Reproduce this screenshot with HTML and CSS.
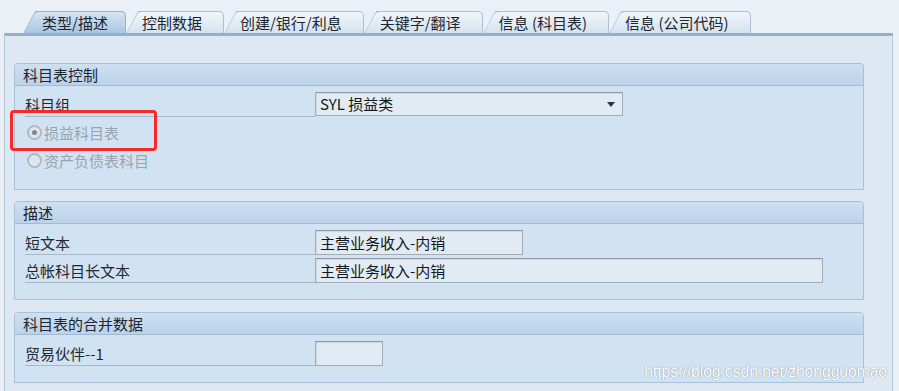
FILE: index.html
```html
<!DOCTYPE html>
<html lang="zh-CN">
<head>
  <meta charset="UTF-8">
  <title>科目表 - 类型/描述</title>
  <link rel="stylesheet" href="styles.css">
</head>
<body>

  <div class="screen">
    <!-- Tab strip -->
    <div class="tabs">
      <div class="tab active">类型/描述</div>
      <div class="tab">控制数据</div>
      <div class="tab">创建/银行/利息</div>
      <div class="tab">关键字/翻译</div>
      <div class="tab">信息 (科目表)</div>
      <div class="tab">信息 (公司代码)</div>
    </div>

    <div class="panel">
      <!-- 科目表控制 -->
      <section class="group group-control">
        <div class="group-title">科目表控制</div>
        <div class="group-body">
          <div class="row">
            <span class="label">科目组</span>
            <div class="select">SYL 损益类<span class="arrow"></span></div>
          </div>
          <div class="row radio-row">
            <span class="radio checked"></span>损益科目表
          </div>
          <div class="row radio-row">
            <span class="radio"></span>资产负债表科目
          </div>
        </div>
        <div class="highlight"></div>
      </section>

      <!-- 描述 -->
      <section class="group">
        <div class="group-title">描述</div>
        <div class="group-body">
          <div class="row">
            <span class="label">短文本</span>
            <div class="field field-short">主营业务收入-内销</div>
          </div>
          <div class="row">
            <span class="label">总帐科目长文本</span>
            <div class="field field-long">主营业务收入-内销</div>
          </div>
        </div>
      </section>

      <!-- 合并数据 -->
      <section class="group">
        <div class="group-title">科目表的合并数据</div>
        <div class="group-body">
          <div class="row">
            <span class="label">贸易伙伴--1</span>
            <div class="field field-tiny"></div>
          </div>
        </div>
      </section>

      <div class="watermark">https://blog.csdn.net/zhongguomao</div>
    </div>
  </div>

</body>
</html>
```

FILE: styles.css
```css
body {
  margin: 0;
  background: #eaf0f6;
  font-family: "Noto Sans CJK SC", "Liberation Sans", sans-serif;
  font-size: 15px;
  color: #1e2833;
}

.screen {
  height: 391px;
  overflow: hidden;
  display: flex;
  flex-direction: column;
  padding-top: 11px;
  box-sizing: border-box;
}

/* ---------- tabs ---------- */
.tabs {
  display: flex;
  padding-left: 23px;
  height: 22px;
}

.tab {
  position: relative;
  z-index: 1;
  margin-left: 12px;
  padding: 0 21px 0 4px;
  height: 22px;
  line-height: 22px;
  box-sizing: border-box;
  background: linear-gradient(#f1f6fa, #d4e2ef);
  border-top: 1px solid #a9c0d6;
  border-right: 1px solid #a9c0d6;
  border-radius: 0 5px 0 0;
  color: #1c2631;
  white-space: nowrap;
}

.tab::before {
  content: "";
  position: absolute;
  top: -1px;
  bottom: 0;
  left: -12px;
  width: 26px;
  background: linear-gradient(#f1f6fa, #d4e2ef);
  border-top: 1px solid #a9c0d6;
  border-left: 1px solid #a9c0d6;
  border-radius: 4px 0 0 0;
  transform: skewX(-28deg);
  transform-origin: bottom left;
  z-index: -1;
}

.tab.active {
  z-index: 2;
  padding: 0 17px 0 7px;
  background: linear-gradient(#d5e4f2, #aac6e2);
  border-color: #93b2d0;
}

.tab.active::before {
  background: linear-gradient(#d5e4f2, #aac6e2);
  border-color: #93b2d0;
}

/* ---------- panel ---------- */
.panel {
  position: relative;
  flex: 1;
  margin: 0 6px 0 4px;
  padding: 27px 28px 0 9px;
  background: #dde8f2;
  border-top: 3px solid #8eb0d1;
  border-left: 1px solid #b4c8db;
  border-right: 1px solid #b4c8db;
  display: flex;
  flex-direction: column;
  gap: 11px;
}

.group {
  position: relative;
  border: 1px solid #a8c1da;
  border-radius: 4px 4px 0 0;
  background: #d1e3f2;
}

.group + .group + .group {
  margin-top: 1px;
}

.group-title {
  height: 21px;
  line-height: 21px;
  padding-left: 8px;
  background: linear-gradient(#cee0f1, #bbd2e8);
  border-bottom: 1px solid #9fbad5;
  border-radius: 3px 3px 0 0;
  color: #1c2530;
}

.group-body {
  padding: 4px 10px 15px;
}

.row {
  display: flex;
  align-items: center;
  height: 28px;
}

.label {
  width: 290px;
  height: 25px;
  line-height: 25px;
  box-sizing: border-box;
  border-bottom: 1px solid #aab7c4;
}

.select,
.field {
  height: 25px;
  line-height: 23px;
  box-sizing: border-box;
  padding-left: 4px;
  background: #e2ebf3;
  border: 1px solid #a2acb5;
  border-top-color: #8f99a3;
  box-shadow: inset 1px 1px 1px rgba(0, 0, 0, 0.08);
  color: #111820;
}

.select {
  position: relative;
  width: 308px;
  height: 24px;
  line-height: 22px;
}

.arrow {
  position: absolute;
  right: 7px;
  top: 9px;
  width: 0;
  height: 0;
  border-left: 4px solid transparent;
  border-right: 4px solid transparent;
  border-top: 5px solid #26344f;
}

.field-short { width: 208px; }
.field-long { width: 508px; }
.field-tiny { width: 68px; }

.radio-row {
  padding-left: 2px;
  color: #9aa4ae;
}

.radio {
  width: 11px;
  height: 11px;
  margin-right: 2px;
  border: 2px solid #b1b9c1;
  border-radius: 50%;
  background: #dfe7ee;
  position: relative;
}

.radio.checked::after {
  content: "";
  position: absolute;
  left: 3px;
  top: 3px;
  width: 5px;
  height: 5px;
  border-radius: 50%;
  background: #7f878f;
}

/* red annotation box */
.highlight {
  position: absolute;
  left: -5px;
  top: 46px;
  width: 141px;
  height: 35px;
  border: 3px solid #f42a2a;
  border-radius: 4px;
}

.watermark {
  position: absolute;
  right: 5px;
  bottom: 10px;
  font-family: "Liberation Sans", Arial, sans-serif;
  font-size: 15.6px;
  color: #ffffff;
  text-shadow: 0 0 1px #8c99a6, 0 0 1px #8c99a6;
}
```
